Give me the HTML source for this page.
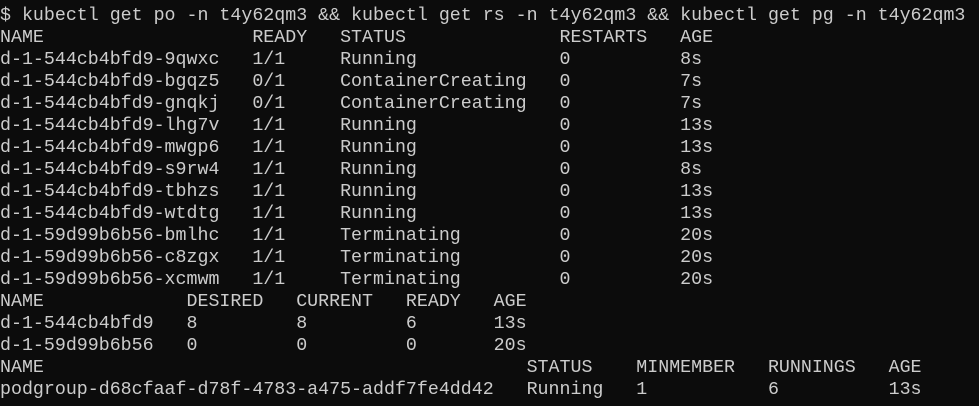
<!DOCTYPE html>
<html><head><meta charset="utf-8"><style>
html,body{margin:0;padding:0;background:#0c0c0c;width:979px;height:406px;overflow:hidden}
pre{margin:0;position:absolute;left:0;top:5px;font-family:"Liberation Mono",monospace;font-size:18.3px;line-height:22px;color:#cccccc;white-space:pre}
</style></head><body><pre>$ kubectl get po -n t4y62qm3 &amp;&amp; kubectl get rs -n t4y62qm3 &amp;&amp; kubectl get pg -n t4y62qm3
NAME                   READY   STATUS              RESTARTS   AGE
d-1-544cb4bfd9-9qwxc   1/1     Running             0          8s
d-1-544cb4bfd9-bgqz5   0/1     ContainerCreating   0          7s
d-1-544cb4bfd9-gnqkj   0/1     ContainerCreating   0          7s
d-1-544cb4bfd9-lhg7v   1/1     Running             0          13s
d-1-544cb4bfd9-mwgp6   1/1     Running             0          13s
d-1-544cb4bfd9-s9rw4   1/1     Running             0          8s
d-1-544cb4bfd9-tbhzs   1/1     Running             0          13s
d-1-544cb4bfd9-wtdtg   1/1     Running             0          13s
d-1-59d99b6b56-bmlhc   1/1     Terminating         0          20s
d-1-59d99b6b56-c8zgx   1/1     Terminating         0          20s
d-1-59d99b6b56-xcmwm   1/1     Terminating         0          20s
NAME             DESIRED   CURRENT   READY   AGE
d-1-544cb4bfd9   8         8         6       13s
d-1-59d99b6b56   0         0         0       20s
NAME                                            STATUS    MINMEMBER   RUNNINGS   AGE
podgroup-d68cfaaf-d78f-4783-a475-addf7fe4dd42   Running   1           6          13s</pre></body></html>
